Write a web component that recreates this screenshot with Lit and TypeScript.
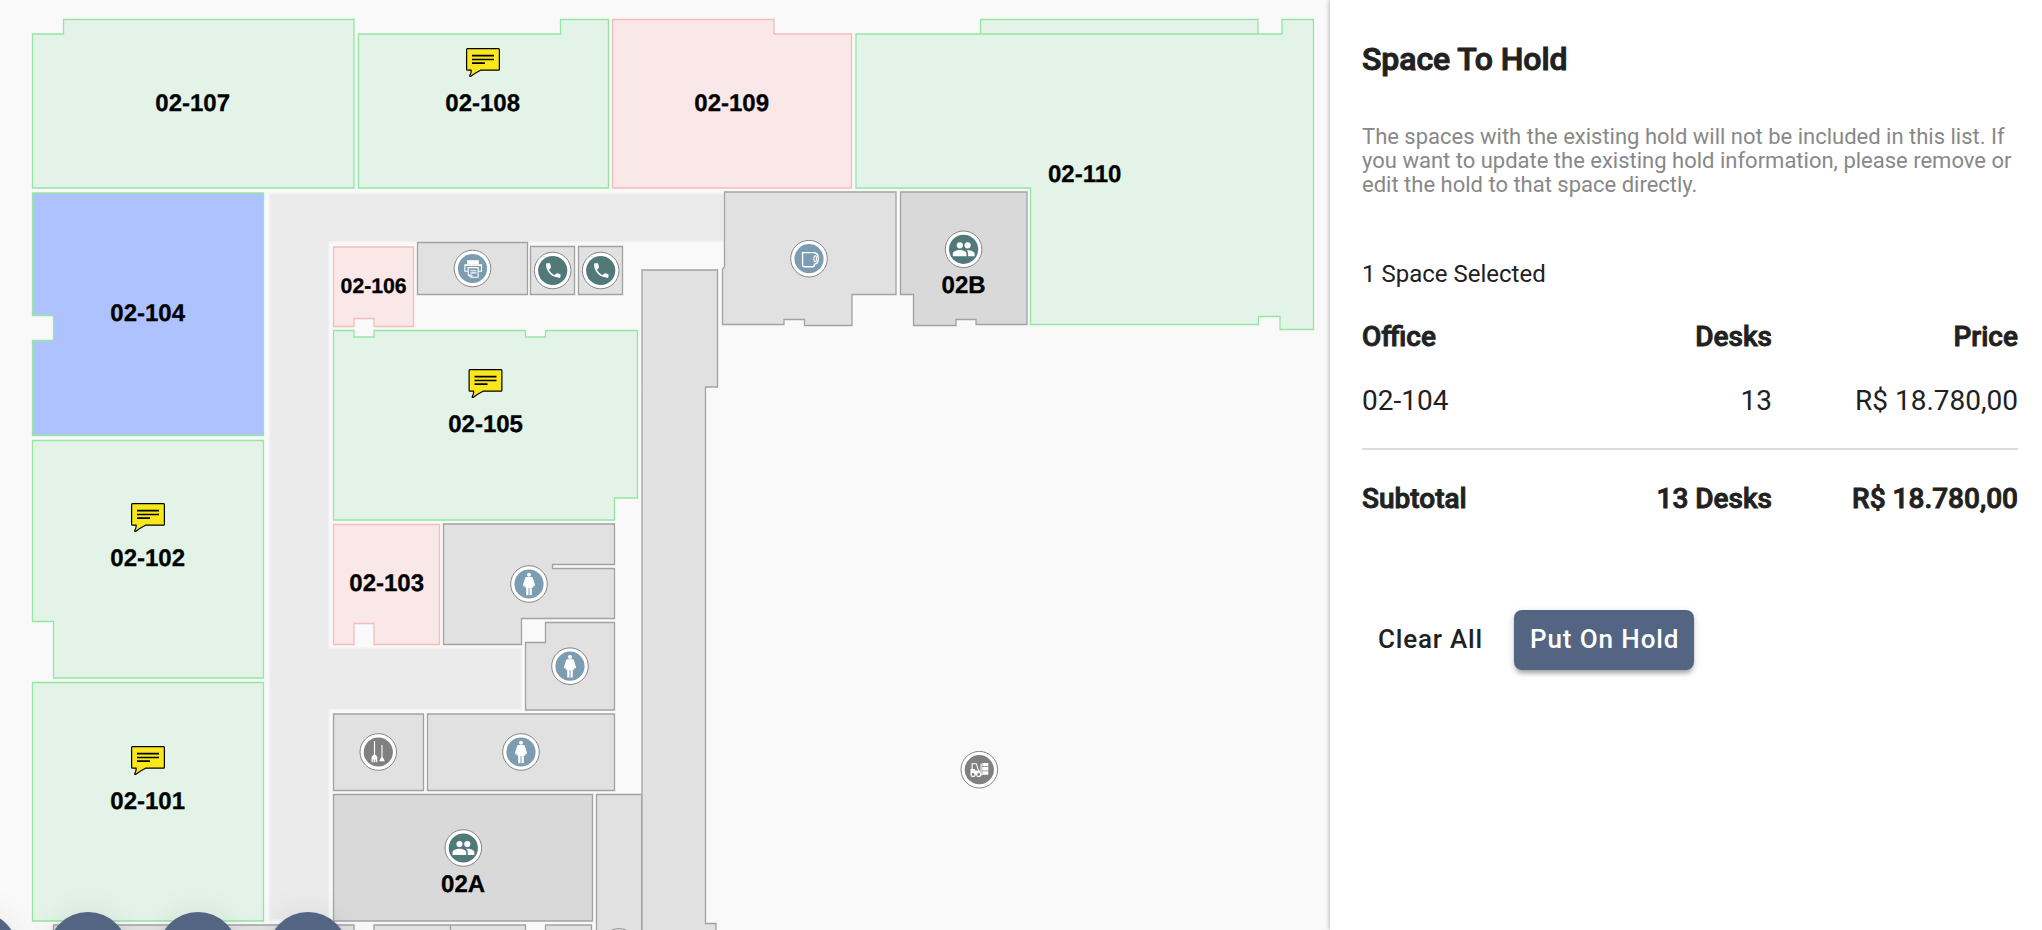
import { LitElement, html, css, svg } from "lit";
import { customElement, property } from "lit/decorators.js";

type Kind = "free" | "held" | "picked" | "plain" | "meeting" | "hall";
interface Shape { kind: Kind; d: string }
interface Label { text: string; x: number; y: number; small?: boolean; note?: [number, number] }
interface Pin { icon: string; tone: string; x: number; y: number }

const SHAPES: Shape[] = [
  { kind: "hall", d: "M269.5 193.5H724V242H329V648H521.5V709.5H329V920H269.5Z" },
  { kind: "free", d: "M32.5 34H63.5V19.5H354V188H32.5Z" },
  { kind: "free", d: "M358.5 34H560.5V19.5H608.5V188H358.5Z" },
  { kind: "held", d: "M612.5 19.5H774V34H851.5V188H612.5Z" },
  { kind: "free", d: "M980.5 34V19.5H1258V34" },
  { kind: "free", d: "M856 34H1282V19.5H1313.5V329.5H1280V316.5H1258.5V324.5H1030.5V188H856Z" },
  { kind: "picked", d: "M32.5 193H263.5V435.5H32.5V340.5H53.5V315.5H32.5Z" },
  { kind: "free", d: "M32.5 440.5H263.5V678H53.5V621.5H32.5Z" },
  { kind: "free", d: "M32.5 682.5H263.5V921H32.5Z" },
  { kind: "held", d: "M333.5 247H413.5V326.5H374V318.5H354V326.5H333.5Z" },
  { kind: "free", d: "M333.5 330.5H354V337H374V330.5H525.5V337H545.5V330.5H637.5V498H614.5V520H333.5Z" },
  { kind: "held", d: "M333.5 524.5H439.5V644.5H374V623.5H354V644.5H333.5Z" },
  { kind: "plain", d: "M417.5 242.5H527.5V294.5H417.5Z" },
  { kind: "plain", d: "M530.5 246.5H574.5V294.5H530.5Z" },
  { kind: "plain", d: "M578.5 246.5H622.5V294.5H578.5Z" },
  { kind: "plain", d: "M724.5 192H896V294.5H852V325.5H804.5V319.5H784V324.5H722.5V269L724.5 267Z" },
  { kind: "meeting", d: "M900.5 192H1027V324.5H976V319.5H956V325.5H913.5V294.5H900.5Z" },
  { kind: "plain", d: "M443.5 524H614.5V564.5H552.5V568.5H614.5V618.5H521.5V644.5H443.5Z" },
  { kind: "plain", d: "M545.5 622.5H614.5V710H525.5V642.5H545.5Z" },
  { kind: "plain", d: "M333.5 714H423.5V790.5H333.5Z" },
  { kind: "plain", d: "M427.5 714H614.5V790.5H427.5Z" },
  { kind: "meeting", d: "M333.5 794.5H592.5V921H333.5Z" },
  { kind: "plain", d: "M596.5 794.5H642V940H596.5Z" },
  { kind: "plain", d: "M642 270H717.5V387H705.5V923.5H716V940H642Z" },
  { kind: "plain", d: "M53.5 925H354V940H53.5Z" },
  { kind: "plain", d: "M374 925H525.5V940H374ZM450.5 925V940" },
  { kind: "plain", d: "M545.5 925H591.5V940H545.5Z" },
];

const LABELS: Label[] = [
  { text: "02-107", x: 192.7, y: 110.6 },
  { text: "02-108", x: 482.7, y: 110.6, note: [466, 48] },
  { text: "02-109", x: 731.7, y: 110.6 },
  { text: "02-110", x: 1084.7, y: 181.5 },
  { text: "02-104", x: 147.7, y: 321 },
  { text: "02-102", x: 147.7, y: 565.5, note: [131, 503] },
  { text: "02-101", x: 147.7, y: 808.5, note: [131, 746] },
  { text: "02-106", x: 373.6, y: 292.7, small: true },
  { text: "02-105", x: 485.6, y: 431.5, note: [468.5, 369] },
  { text: "02-103", x: 386.7, y: 591 },
  { text: "02B", x: 963.6, y: 293 },
  { text: "02A", x: 463.1, y: 891.5 },
];

const PINS: Pin[] = [
  { icon: "printer", tone: "blue", x: 472.5, y: 268.5 },
  { icon: "phone", tone: "teal", x: 552.7, y: 270.5 },
  { icon: "phone", tone: "teal", x: 600.7, y: 270.5 },
  { icon: "cup", tone: "blue", x: 809, y: 258.7 },
  { icon: "people", tone: "teal", x: 963.6, y: 249.3 },
  { icon: "woman", tone: "blue", x: 529, y: 584 },
  { icon: "woman", tone: "blue", x: 570, y: 666.2 },
  { icon: "woman", tone: "blue", x: 521, y: 752 },
  { icon: "broom", tone: "gray", x: 378.3, y: 752 },
  { icon: "people", tone: "teal", x: 463.3, y: 848 },
  { icon: "forklift", tone: "gray", x: 979.3, y: 769.7 },
  { icon: "broom", tone: "gray", x: 619, y: 947 },
];

// Glyphs are centred on the origin of their pin.
const GLYPHS: Record<string, unknown> = {
  printer: svg`
    <path class="ink" d="M-5.3-8.3H6.3V-4.3H-5.3Z"/>
    <path class="line" d="M-4.5 2.8H-7.6V-3.8H9V2.8H5.8"/>
    <path class="ink" d="M-7.5-3.8H9V-2.6H-7.5ZM-5-1.6H6.3V-.2H-5Z"/>
    <path class="line" d="M-4.3-.5V6.6L-1.5 8.8H5.6V-.5M-2 2.2H3.8M-2 4.4H3.8M-3.5 6.5H-.6V8.5"/>`,
  phone: svg`<path class="ink" d="M-5.8-7.2H-3.2Q-2.4-7.2-2.3-6.4-2.2-4.8-1.7-3.4-1.6-2.8-2-2.4L-3.8-.7Q-1.9 3 1.8 4.8L3.4 3.1Q3.9 2.7 4.4 2.8 5.8 3.3 7.1 3.3 7.8 3.4 7.8 4.2V6.4Q7.7 7.2 7 7.2C-.8 7-6.6 1.6-6.7-6.2Q-6.6-7.1-5.8-7.2Z"/>`,
  cup: svg`<path class="line thick" d="M-6.4-6.1H5.2Q9.4-5.4 9.4-.2 9.4 4.9 5.4 5.6V6.4Q5.2 8.1 3.6 8.1H-4.7Q-6.4 8.1-6.4 6.4Z"/><ellipse class="line" cx="6.2" cy="0" rx="1.3" ry="2.9"/>`,
  people: svg`
    <circle class="ink" cx="-3.8" cy="-4" r="3.1"/><circle class="ink" cx="4" cy="-4" r="3.1"/>
    <path class="ink" d="M-10.8 7V4.2C-10.8 1.9-6.6.7-3.9.7S2.9 1.9 2.9 4.2V7ZM4.5 7V4.2C4.5 2.7 3.8 1.7 2.8 1 6 .4 11 1.9 11 4.2V7Z"/>`,
  woman: svg`
    <circle class="ink" cx="0" cy="-9.3" r="2"/>
    <path class="ink" d="M-2.4-7H2.4Q3.7-7 4-5.6L6.1 1 5.8 2.1 4.6 2.3 3.9.6 4.4 3.5H2.8V11.2H.5V4H-.5V11.2H-2.8V3.5H-4.4L-3.9.6-4.6 2.3-5.8 2.1-6.1 1-4-5.6Q-3.7-7-2.4-7Z"/>`,
  broom: svg`
    <path class="line" d="M-3.8-11V4M3.7-7V6"/>
    <path class="ink" d="M-5.2 3H-2.4L-1 5V10.3H-2.2V7.5H-3V10.3H-4.6V7.5H-5.4V10.3H-6.7V5ZM2.7 5.5H4.7L6.5 9.2H1Z"/>`,
  forklift: svg`
    <path class="line" d="M-7.2 2.8V-6H-3L-.4 2M1.8-6V5H3"/>
    <path class="ink" d="M-8.8-.8H-5L-3.5.8H.8V5H-8.8ZM3-6.8H9V-3.5H3ZM3-2.6H9V.7H3ZM3 1.6H9V5H3Z"/>
    <circle class="wheel" cx="-6.2" cy="4.8" r="2"/><circle class="wheel" cx="-.6" cy="4.8" r="2"/>`,
};

@customElement("floor-map")
class FloorMap extends LitElement {
  static styles = css`
    :host { display: block; background: #f9f9f9; overflow: hidden; position: relative; }
    .plan { display: block; width: 1330px; height: 930px; }
    .shape { stroke-width: 1.3; }
    .free { fill: #e3f3e8; stroke: #94e6a0; }
    .held { fill: #fae7e7; stroke: #f5bcbc; }
    .picked { fill: #adc2ff; stroke: #94e6a0; }
    .plain { fill: #e1e1e1; stroke: #a2a2a2; }
    .meeting { fill: #d9d9d9; stroke: #a2a2a2; }
    .hall { fill: #ebebeb; stroke: #f3f3f3; }
    .label { font: bold 24px "Liberation Sans", Arial, sans-serif; text-anchor: middle; fill: #000;
      stroke: #000; stroke-width: .3; text-rendering: geometricPrecision; }
    .small { font-size: 21.2px; }
    .ring { fill: #fff; stroke: #858585; stroke-width: 1; }
    .blue { fill: #7c9cb1; }
    .teal { fill: #52797a; }
    .gray { fill: #808080; }
    .ink { fill: #fff; }
    .line { fill: none; stroke: #fff; stroke-width: 1.1; }
    .thick { stroke-width: 1.4; }
    .wheel { fill: #808080; stroke: #fff; stroke-width: 1.1; }
    .note { fill: #f9e71c; stroke: #000; stroke-width: 1.2; stroke-linejoin: round; }
    .rule { stroke: #000; stroke-width: 1.7; }
    .tools { position: absolute; left: -62px; top: 912px; display: flex; gap: 30px; }
    .fab { width: 80px; height: 80px; padding: 0; border: 0; border-radius: 50%; background: #546483;
      box-shadow: 0 6px 10px rgba(0,0,0,.1), 0 2px 36px rgba(0,0,0,.08), 0 6px 10px -2px rgba(0,0,0,.15); }
  `;
  render() {
    return html`
      <svg class="plan" viewBox="0 0 1330 930">
        ${SHAPES.map((s) => svg`<path class="shape ${s.kind}" d=${s.d}></path>`)}
        ${LABELS.map((l) => svg`
          ${l.note ? svg`<g transform="translate(${l.note[0]} ${l.note[1]})">
            <path class="note" d="M1.5 .6H32.5Q33.4 .6 33.4 1.5V21.3Q33.4 22.2 32.5 22.2H14.5Q9 25 4.9 28.3 3.2 28.6 3.8 27.4 5.3 25.5 5.2 22.2H1.5Q.6 22.2 .6 21.3V1.5Q.6 .6 1.5 .6Z"></path>
            <path class="rule" d="M6 7.7H28M6 11.5H28M6 15.2H19"></path></g>` : ""}
          <text class="label ${l.small ? "small" : ""}" x=${l.x} y=${l.y}>${l.text}</text>`)}
        ${PINS.map((p) => svg`<g transform="translate(${p.x} ${p.y})">
          <circle class="ring" r="18.3"></circle><circle class=${p.tone} r="14.6"></circle>${GLYPHS[p.icon]}</g>`)}
      </svg>
      <div class="tools">${[0, 1, 2, 3].map(() => html`<button class="fab"></button>`)}</div>`;
  }
}

@customElement("hold-panel")
class HoldPanel extends LitElement {
  @property({ attribute: false }) rows = [{ office: "02-104", desks: 13, price: "R$ 18.780,00" }];
  static styles = css`
    :host { display: flex; flex-direction: column; box-sizing: border-box; padding: 39px 24px 0 32px;
      background: #fff; color: #212121; font-family: Roboto, sans-serif;
      box-shadow: 0 0 5px rgba(0,0,0,.35); position: relative; }
    h2 { margin: 0; font-size: 32px; line-height: 40px; font-weight: 500; letter-spacing: -.05px; -webkit-text-stroke: 1px; }
    .hint { margin: 46px 0 0; font-size: 22px; line-height: 24px; color: #888; white-space: nowrap; }
    .count { margin: 63px 0 0; font-size: 24px; line-height: 28px; }
    .grid { display: grid; grid-template-columns: 200px 210px 1fr; font-size: 28px; line-height: 32px; text-align: right; }
    .grid :first-child { text-align: left; }
    .bold { font-weight: 500; -webkit-text-stroke: .9px; }
    .head { margin-top: 33px; }
    .row { margin-top: 32px; padding-bottom: 31px; border-bottom: 2px solid #dcdcdc; }
    .total { margin-top: 33px; }
    .actions { display: flex; gap: 16px; margin-top: 95px; }
    button { height: 60px; padding: 0 16px 2px; border: 0; border-radius: 8px; background: none; color: #212121;
      font: 500 26px/58px Roboto, sans-serif; letter-spacing: .9px; white-space: nowrap; }
    .primary { width: 180px; background: #546483; color: #fff;
      box-shadow: 0 6px 4px -4px rgba(0,0,0,.2), 0 4px 4px rgba(0,0,0,.14), 0 2px 10px rgba(0,0,0,.12); }
    .clear { width: 136px; letter-spacing: .8px; }
  `;
  render() {
    return html`
      <h2>Space To Hold</h2>
      <p class="hint">The spaces with the existing hold will not be included in this list. If<br>you want to update the existing hold information, please remove or<br>edit the hold to that space directly.</p>
      <p class="count">${this.rows.length} Space Selected</p>
      <div class="grid head bold"><span>Office</span><span>Desks</span><span>Price</span></div>
      ${this.rows.map((r) => html`<div class="grid row"><span>${r.office}</span><span>${r.desks}</span><span>${r.price}</span></div>`)}
      <div class="grid total bold"><span>Subtotal</span><span>13 Desks</span><span>R$ 18.780,00</span></div>
      <div class="actions"><button class="clear">Clear All</button><button class="primary">Put On Hold</button></div>`;
  }
}

@customElement("app-root")
class AppRoot extends LitElement {
  static styles = css`
    :host { display: grid; grid-template-columns: 1330px 1fr; height: 930px; overflow: hidden; }
  `;
  render() {
    return html`<floor-map></floor-map><hold-panel></hold-panel>`;
  }
}
